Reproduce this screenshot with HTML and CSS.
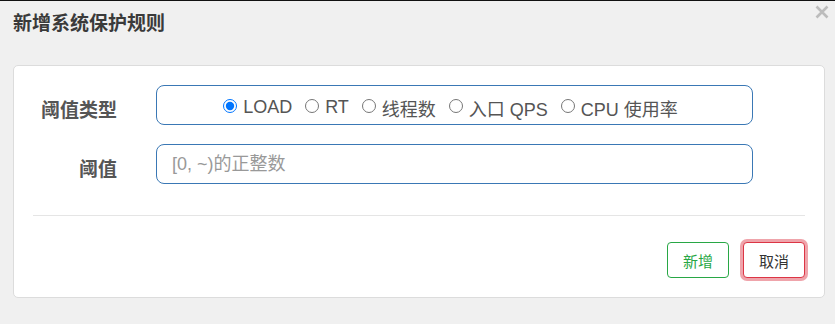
FILE: index.html
```html
<!DOCTYPE html>
<html lang="zh-CN">
<head>
<meta charset="utf-8">
<title>新增系统保护规则</title>
<link rel="stylesheet" href="styles.css">
</head>
<body>
<div class="modal">
  <div class="modal-header">
    <h4 class="modal-title">新增系统保护规则</h4>
    <button class="close" type="button" aria-label="关闭">
      <svg width="14" height="14" viewBox="0 0 14 14" aria-hidden="true">
        <path d="M1.5 1.5 L12.5 12.5 M12.5 1.5 L1.5 12.5" stroke="#bcbcbc" stroke-width="2.6" stroke-linecap="butt" fill="none"/>
      </svg>
    </button>
  </div>
  <div class="card">
    <div class="form-grid">
      <label class="form-label">阈值类型</label>
      <div class="radio-box">
        <label class="radio-item"><input type="radio" name="grade" checked><span>LOAD</span></label>
        <label class="radio-item"><input type="radio" name="grade"><span>RT</span></label>
        <label class="radio-item"><input type="radio" name="grade"><span>线程数</span></label>
        <label class="radio-item"><input type="radio" name="grade"><span>入口 QPS</span></label>
        <label class="radio-item"><input type="radio" name="grade"><span>CPU 使用率</span></label>
      </div>
      <label class="form-label">阈值</label>
      <input class="text-input" type="text" placeholder="[0, ~)的正整数">
    </div>
    <hr class="divider">
    <div class="actions">
      <button class="btn btn-add" type="button">新增</button>
      <button class="btn btn-cancel" type="button">取消</button>
    </div>
  </div>
</div>
</body>
</html>
```

FILE: styles.css
```css
* { box-sizing: border-box; }
html, body {
  margin: 0;
  padding: 0;
  background: #f0f0f0;
}
body {
  border-top: 1px solid #111;
  font-family: "Liberation Sans", "Noto Sans CJK SC", sans-serif;
  color: #333;
  width: 835px;
  height: 324px;
  overflow: hidden;
}
.modal {
  position: relative;
}
.modal-header {
  position: relative;
  height: 64px;
  padding: 9px 13px 0;
}
.modal-title {
  margin: 0;
  font-size: 19px;
  line-height: 28px;
  font-weight: bold;
  color: #3a3a3a;
}
.close {
  position: absolute;
  top: 4px;
  right: 6px;
  width: 14px;
  height: 14px;
  padding: 0;
  border: 0;
  background: transparent;
  cursor: pointer;
  display: block;
}
.close svg { display: block; }
.card {
  margin: 0 10px 0 13px;
  background: #fff;
  border: 1px solid #dcdcdc;
  border-radius: 5px;
  padding: 19px 19px 19px;
}
.form-grid {
  display: grid;
  grid-template-columns: 84px 597px;
  column-gap: 39px;
  row-gap: 19px;
}
.form-label {
  display: flex;
  align-items: center;
  justify-content: flex-end;
  height: 40px;
  padding-top: 6px;
  font-size: 19px;
  font-weight: bold;
  color: #555;
  white-space: nowrap;
}
.radio-box {
  height: 40px;
  border: 1px solid #3a78b5;
  border-radius: 8px;
  display: flex;
  align-items: center;
  justify-content: center;
  padding: 5px 8px 0 0;
}
.radio-item {
  display: inline-flex;
  align-items: center;
  margin-right: 13px;
  font-size: 18px;
  color: #555;
  white-space: nowrap;
}
.radio-item:last-child { margin-right: 0; }
.radio-item input {
  width: 14px;
  height: 14px;
  margin: 0 6px 3px 0;
}
.text-input {
  height: 40px;
  width: 597px;
  border: 1px solid #3a78b5;
  border-radius: 8px;
  padding: 0 15px;
  font-family: "Liberation Sans", "Noto Sans CJK SC", sans-serif;
  font-size: 18px;
  color: #555;
  outline: none;
}
.text-input::placeholder { color: #999; }
.divider {
  margin: 31px 0 0;
  border: 0;
  border-top: 1px solid #e5e5e5;
  height: 0;
}
.actions {
  margin-top: 26px;
  display: flex;
  justify-content: flex-end;
  gap: 14px;
}
.btn {
  width: 62px;
  height: 36px;
  border-radius: 4px;
  background: #fff;
  font-family: "Liberation Sans", "Noto Sans CJK SC", sans-serif;
  font-size: 15px;
  padding: 0;
  cursor: pointer;
}
.btn-add {
  border: 1px solid #28a745;
  color: #28a745;
}
.btn-cancel {
  border: 1px solid #dc3545;
  color: #333;
  box-shadow: 0 0 0 3px rgba(220, 53, 69, 0.45);
}
```
